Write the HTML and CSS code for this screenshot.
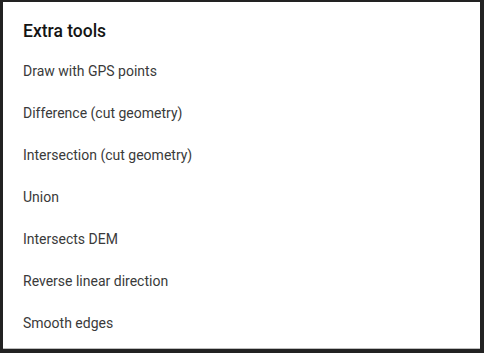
FILE: index.html
```html
<!DOCTYPE html>
<html lang="en">
<head>
  <meta charset="UTF-8" />
  <title>Extra tools</title>
  <link rel="stylesheet" href="styles.css">
</head>
<body>
  <div class="dialog">
    <div class="dialog-title">Extra tools</div>
    <ul class="tool-list">
      <li class="tool-item">Draw with GPS points</li>
      <li class="tool-item">Difference (cut geometry)</li>
      <li class="tool-item">Intersection (cut geometry)</li>
      <li class="tool-item">Union</li>
      <li class="tool-item">Intersects DEM</li>
      <li class="tool-item">Reverse linear direction</li>
      <li class="tool-item">Smooth edges</li>
    </ul>
  </div>
</body>
</html>
```

FILE: styles.css
```css
body {
  margin: 0;
  padding: 0;
  height: 353px;
  background: #222222;
  font-family: Roboto, "Liberation Sans", sans-serif;
}

.dialog {
  box-sizing: border-box;
  margin: 2px 4px 0 3px;
  height: 347px;
  background: #ffffff;
  padding-bottom: 5px;
  border-bottom: 1px solid #bdbdbd;
}

.dialog-title {
  padding: 19px 20px 9px 20px;
  line-height: 20px;
  font-size: 17.5px;
  font-weight: 500;
  color: #141414;
}

.tool-list {
  list-style: none;
  margin: 0;
  padding: 0;
}

.tool-item {
  height: 42px;
  line-height: 42px;
  padding-left: 20px;
  font-size: 14px;
  color: #3a3a3a;
}
```
